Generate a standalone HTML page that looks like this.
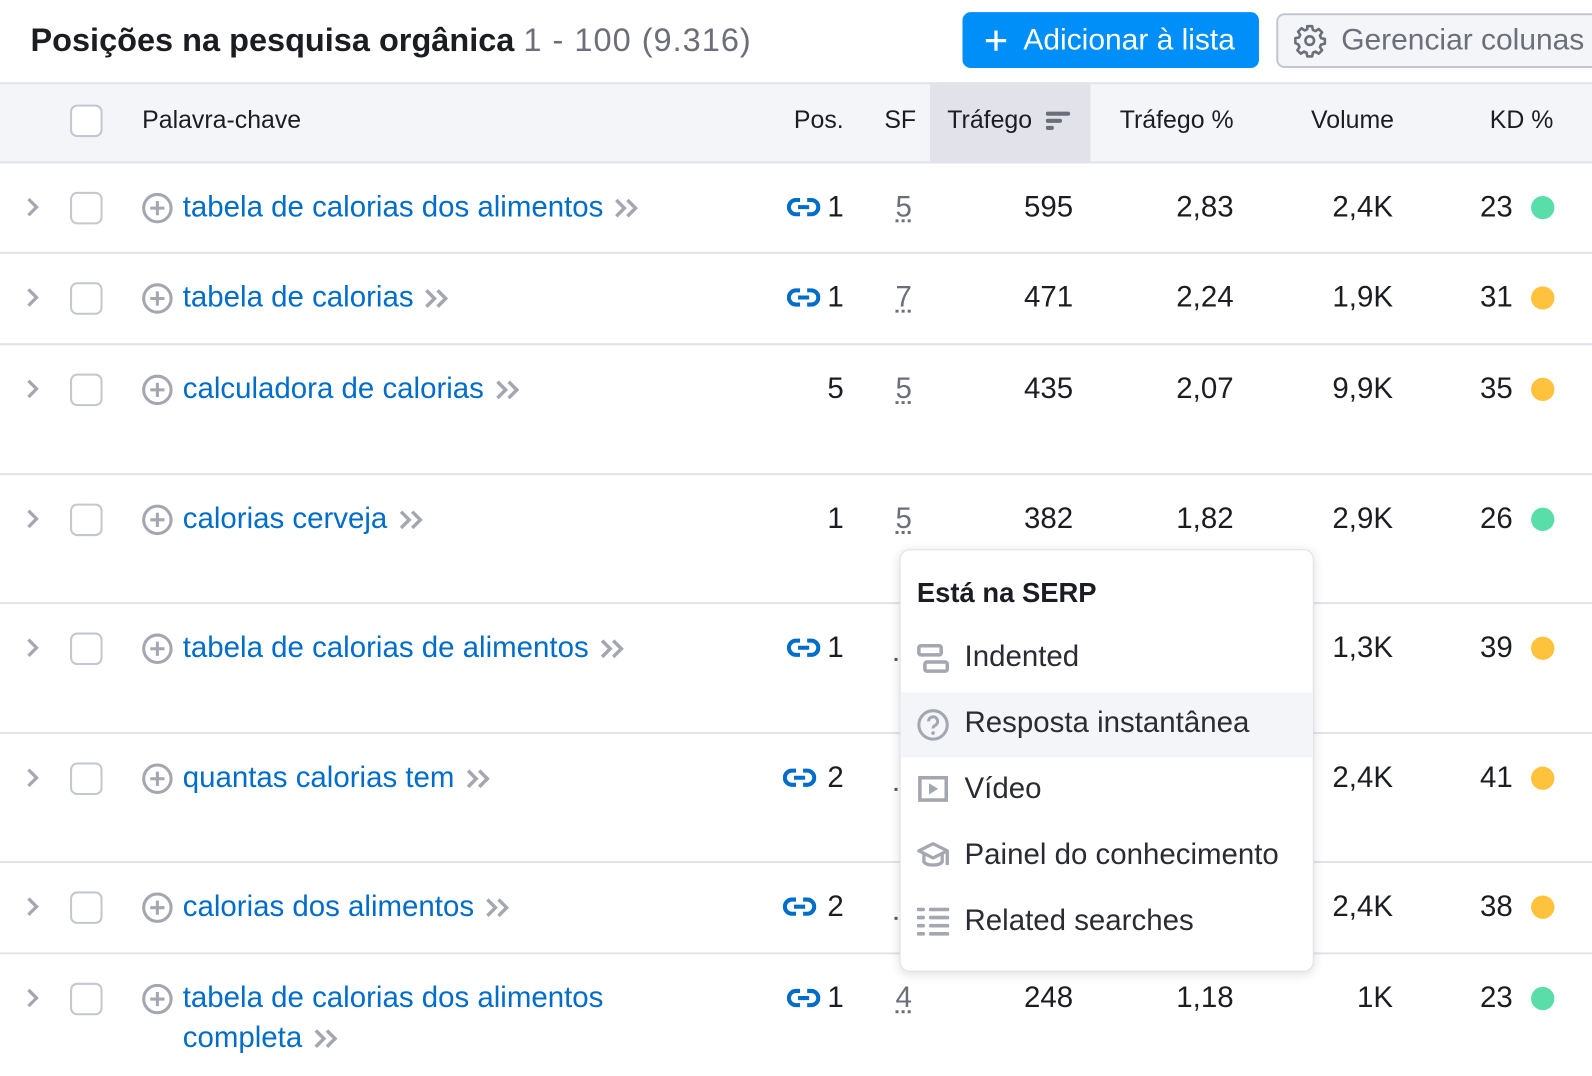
<!DOCTYPE html>
<html><head><meta charset="utf-8">
<style>
*{margin:0;padding:0;box-sizing:border-box}
body{width:1592px;height:1076px;overflow:hidden;background:#fff;font-family:"Liberation Sans",sans-serif;color:#1c1d22;position:relative}
#w{position:absolute;left:0;top:0;width:1568px;height:1060px;transform:scale(1.0153);transform-origin:0 0}
.a{position:absolute;white-space:nowrap}
.t{font-size:29px;line-height:32px;height:32px}
.h{font-size:24.5px;line-height:32px}
.r{text-align:right}
.kw{color:#006dca}
.sep{position:absolute;left:0;width:1592px;height:2px;background:#e2e3ea}
.cb{position:absolute;left:69px;width:32px;height:32px;border:2px solid #c5c7d0;border-radius:7px;background:#fff}
.dot{position:absolute;left:1508px;width:23px;height:23px;border-radius:50%}
.g{background:#59dea9}.y{background:#ffc23c}
.sf{text-decoration:underline dotted #6c6e79;text-underline-offset:3px;color:#6c6e79}
</style></head><body><div id="w">

<div class="a" style="left:30px;top:19px;font-size:32px;line-height:40px;font-weight:bold;color:#1c1d22">Posições na pesquisa orgânica <span style="font-weight:normal;color:#6c6e79;letter-spacing:1px">1 - 100 (9.316)</span></div>

<div class="a" style="left:948px;top:12px;width:292px;height:55px;background:#008ff8;border-radius:8px;color:#fff;font-size:29.5px;line-height:55px;padding-left:20px">
<svg width="26" height="26" viewBox="0 0 26 26" style="vertical-align:-4px;margin-right:14px"><path d="M13 3V23M3 13H23" stroke="#fff" stroke-width="3.2"/></svg>Adicionar à lista</div>

<div class="a" style="left:1257px;top:13px;width:360px;height:54px;background:#f4f5f9;border:2px solid #c4c7cf;border-radius:8px;color:#6c6e79;font-size:29.5px;line-height:50px;padding-left:14px">
<svg width="34" height="34" viewBox="0 0 24 24" style="vertical-align:-8px;margin-right:14px"><path d="M10.3 2h3.4l.5 2.6 1.8.8 2.2-1.5 2.4 2.4-1.5 2.2.8 1.8 2.6.5v3.4l-2.6.5-.8 1.8 1.5 2.2-2.4 2.4-2.2-1.5-1.8.8-.5 2.6h-3.4l-.5-2.6-1.8-.8-2.2 1.5-2.4-2.4 1.5-2.2-.8-1.8L2 13.7v-3.4l2.6-.5.8-1.8-1.5-2.2 2.4-2.4 2.2 1.5 1.8-.8z" fill="none" stroke="#6c6e79" stroke-width="1.8" stroke-linejoin="round"/><circle cx="12" cy="12" r="3" fill="none" stroke="#6c6e79" stroke-width="1.8"/></svg>Gerenciar colunas</div>

<!-- header -->
<div class="a" style="left:0;top:81px;width:1592px;height:80px;background:#f4f5f9;border-top:2px solid #e2e3ea;border-bottom:2px solid #e2e3ea"></div>
<div class="a" style="left:916px;top:83px;width:158px;height:76px;background:#e1e2ea"></div>
<div class="cb" style="top:103px"></div>
<div class="a h" style="left:140px;top:103px">Palavra-chave</div>
<div class="a r h" style="left:740px;width:91px;top:103px">Pos.</div>
<div class="a h" style="left:871px;top:103px">SF</div>
<div class="a h" style="left:933px;top:103px">Tráfego</div>
<svg class="a" style="left:1030px;top:108px" width="26" height="22"><rect x="0" y="2" width="24" height="4" rx="2" fill="#6c6e79"/><rect x="0" y="9" width="16" height="4" rx="2" fill="#6c6e79"/><rect x="0" y="16" width="8" height="4" rx="2" fill="#6c6e79"/></svg>
<div class="a r h" style="left:1060px;width:155px;top:103px">Tráfego %</div>
<div class="a r h" style="left:1220px;width:153px;top:103px">Volume</div>
<div class="a r h" style="left:1400px;width:130px;top:103px">KD %</div>

<!-- separators -->
<div class="sep" style="top:248px"></div>
<div class="sep" style="top:338px"></div>
<div class="sep" style="top:466px"></div>
<div class="sep" style="top:593px"></div>
<div class="sep" style="top:721px"></div>
<div class="sep" style="top:848px"></div>
<div class="sep" style="top:938px"></div>

<!-- Row 1 c=204 -->
<svg class="a" style="left:24px;top:193px" width="16" height="22"><path d="M4 3L12 11L4 19" fill="none" stroke="#a4a6b0" stroke-width="3.2"/></svg>
<div class="cb" style="top:189px"></div>
<svg class="a" style="left:139px;top:189px" width="32" height="32"><circle cx="16" cy="16" r="13.5" fill="none" stroke="#a4a6b0" stroke-width="3"/><path d="M16 9V23M9 16H23" stroke="#a4a6b0" stroke-width="3"/></svg>
<div class="a t kw" style="left:180px;top:188px">tabela de calorias dos alimentos <svg width="28" height="22" style="vertical-align:-3px;margin-left:2px"><path d="M3 3L11 11L3 19M14 3L22 11L14 19" fill="none" stroke="#a4a6b0" stroke-width="3.4"/></svg></div>
<svg class="a" style="left:775px;top:194px" width="33" height="20"><path d="M13 3H9a7 7 0 0 0 0 14h4M20 3h4a7 7 0 0 1 0 14h-4M11 10H22" fill="none" stroke="#006dca" stroke-width="4"/></svg>
<div class="a t r" style="left:790px;width:41px;top:188px">1</div>
<div class="a t sf" style="left:882px;top:188px">5</div>
<div class="a t r" style="left:957px;width:100px;top:188px">595</div>
<div class="a t r" style="left:1115px;width:100px;top:188px">2,83</div>
<div class="a t r" style="left:1272px;width:100px;top:188px">2,4K</div>
<div class="a t r" style="left:1420px;width:70px;top:188px">23</div>
<div class="dot g" style="top:193px"></div>

<!-- Row 2 c=293 -->
<svg class="a" style="left:24px;top:282px" width="16" height="22"><path d="M4 3L12 11L4 19" fill="none" stroke="#a4a6b0" stroke-width="3.2"/></svg>
<div class="cb" style="top:278px"></div>
<svg class="a" style="left:139px;top:278px" width="32" height="32"><circle cx="16" cy="16" r="13.5" fill="none" stroke="#a4a6b0" stroke-width="3"/><path d="M16 9V23M9 16H23" stroke="#a4a6b0" stroke-width="3"/></svg>
<div class="a t kw" style="left:180px;top:277px">tabela de calorias <svg width="28" height="22" style="vertical-align:-3px;margin-left:2px"><path d="M3 3L11 11L3 19M14 3L22 11L14 19" fill="none" stroke="#a4a6b0" stroke-width="3.4"/></svg></div>
<svg class="a" style="left:775px;top:283px" width="33" height="20"><path d="M13 3H9a7 7 0 0 0 0 14h4M20 3h4a7 7 0 0 1 0 14h-4M11 10H22" fill="none" stroke="#006dca" stroke-width="4"/></svg>
<div class="a t r" style="left:790px;width:41px;top:277px">1</div>
<div class="a t sf" style="left:882px;top:277px">7</div>
<div class="a t r" style="left:957px;width:100px;top:277px">471</div>
<div class="a t r" style="left:1115px;width:100px;top:277px">2,24</div>
<div class="a t r" style="left:1272px;width:100px;top:277px">1,9K</div>
<div class="a t r" style="left:1420px;width:70px;top:277px">31</div>
<div class="dot y" style="top:282px"></div>

<!-- Row 3 c=383 -->
<svg class="a" style="left:24px;top:372px" width="16" height="22"><path d="M4 3L12 11L4 19" fill="none" stroke="#a4a6b0" stroke-width="3.2"/></svg>
<div class="cb" style="top:368px"></div>
<svg class="a" style="left:139px;top:368px" width="32" height="32"><circle cx="16" cy="16" r="13.5" fill="none" stroke="#a4a6b0" stroke-width="3"/><path d="M16 9V23M9 16H23" stroke="#a4a6b0" stroke-width="3"/></svg>
<div class="a t kw" style="left:180px;top:367px">calculadora de calorias <svg width="28" height="22" style="vertical-align:-3px;margin-left:2px"><path d="M3 3L11 11L3 19M14 3L22 11L14 19" fill="none" stroke="#a4a6b0" stroke-width="3.4"/></svg></div>
<div class="a t r" style="left:790px;width:41px;top:367px">5</div>
<div class="a t sf" style="left:882px;top:367px">5</div>
<div class="a t r" style="left:957px;width:100px;top:367px">435</div>
<div class="a t r" style="left:1115px;width:100px;top:367px">2,07</div>
<div class="a t r" style="left:1272px;width:100px;top:367px">9,9K</div>
<div class="a t r" style="left:1420px;width:70px;top:367px">35</div>
<div class="dot y" style="top:372px"></div>

<!-- Row 4 c=511 -->
<svg class="a" style="left:24px;top:500px" width="16" height="22"><path d="M4 3L12 11L4 19" fill="none" stroke="#a4a6b0" stroke-width="3.2"/></svg>
<div class="cb" style="top:496px"></div>
<svg class="a" style="left:139px;top:496px" width="32" height="32"><circle cx="16" cy="16" r="13.5" fill="none" stroke="#a4a6b0" stroke-width="3"/><path d="M16 9V23M9 16H23" stroke="#a4a6b0" stroke-width="3"/></svg>
<div class="a t kw" style="left:180px;top:495px">calorias cerveja <svg width="28" height="22" style="vertical-align:-3px;margin-left:2px"><path d="M3 3L11 11L3 19M14 3L22 11L14 19" fill="none" stroke="#a4a6b0" stroke-width="3.4"/></svg></div>
<div class="a t r" style="left:790px;width:41px;top:495px">1</div>
<div class="a t sf" style="left:882px;top:495px">5</div>
<div class="a t r" style="left:957px;width:100px;top:495px">382</div>
<div class="a t r" style="left:1115px;width:100px;top:495px">1,82</div>
<div class="a t r" style="left:1272px;width:100px;top:495px">2,9K</div>
<div class="a t r" style="left:1420px;width:70px;top:495px">26</div>
<div class="dot g" style="top:500px"></div>

<!-- Row 5 c=638 -->
<svg class="a" style="left:24px;top:627px" width="16" height="22"><path d="M4 3L12 11L4 19" fill="none" stroke="#a4a6b0" stroke-width="3.2"/></svg>
<div class="cb" style="top:623px"></div>
<svg class="a" style="left:139px;top:623px" width="32" height="32"><circle cx="16" cy="16" r="13.5" fill="none" stroke="#a4a6b0" stroke-width="3"/><path d="M16 9V23M9 16H23" stroke="#a4a6b0" stroke-width="3"/></svg>
<div class="a t kw" style="left:180px;top:622px">tabela de calorias de alimentos <svg width="28" height="22" style="vertical-align:-3px;margin-left:2px"><path d="M3 3L11 11L3 19M14 3L22 11L14 19" fill="none" stroke="#a4a6b0" stroke-width="3.4"/></svg></div>
<svg class="a" style="left:775px;top:628px" width="33" height="20"><path d="M13 3H9a7 7 0 0 0 0 14h4M20 3h4a7 7 0 0 1 0 14h-4M11 10H22" fill="none" stroke="#006dca" stroke-width="4"/></svg>
<div class="a t r" style="left:790px;width:41px;top:622px">1</div>
<div class="a t r" style="left:1272px;width:100px;top:622px">1,3K</div>
<div class="a t r" style="left:1420px;width:70px;top:622px">39</div>
<div class="dot y" style="top:627px"></div>

<!-- Row 6 c=766 -->
<svg class="a" style="left:24px;top:755px" width="16" height="22"><path d="M4 3L12 11L4 19" fill="none" stroke="#a4a6b0" stroke-width="3.2"/></svg>
<div class="cb" style="top:751px"></div>
<svg class="a" style="left:139px;top:751px" width="32" height="32"><circle cx="16" cy="16" r="13.5" fill="none" stroke="#a4a6b0" stroke-width="3"/><path d="M16 9V23M9 16H23" stroke="#a4a6b0" stroke-width="3"/></svg>
<div class="a t kw" style="left:180px;top:750px">quantas calorias tem <svg width="28" height="22" style="vertical-align:-3px;margin-left:2px"><path d="M3 3L11 11L3 19M14 3L22 11L14 19" fill="none" stroke="#a4a6b0" stroke-width="3.4"/></svg></div>
<svg class="a" style="left:771px;top:756px" width="33" height="20"><path d="M13 3H9a7 7 0 0 0 0 14h4M20 3h4a7 7 0 0 1 0 14h-4M11 10H22" fill="none" stroke="#006dca" stroke-width="4"/></svg>
<div class="a t r" style="left:790px;width:41px;top:750px">2</div>
<div class="a t r" style="left:1272px;width:100px;top:750px">2,4K</div>
<div class="a t r" style="left:1420px;width:70px;top:750px">41</div>
<div class="dot y" style="top:755px"></div>

<!-- Row 7 c=893 -->
<svg class="a" style="left:24px;top:882px" width="16" height="22"><path d="M4 3L12 11L4 19" fill="none" stroke="#a4a6b0" stroke-width="3.2"/></svg>
<div class="cb" style="top:878px"></div>
<svg class="a" style="left:139px;top:878px" width="32" height="32"><circle cx="16" cy="16" r="13.5" fill="none" stroke="#a4a6b0" stroke-width="3"/><path d="M16 9V23M9 16H23" stroke="#a4a6b0" stroke-width="3"/></svg>
<div class="a t kw" style="left:180px;top:877px">calorias dos alimentos <svg width="28" height="22" style="vertical-align:-3px;margin-left:2px"><path d="M3 3L11 11L3 19M14 3L22 11L14 19" fill="none" stroke="#a4a6b0" stroke-width="3.4"/></svg></div>
<svg class="a" style="left:771px;top:883px" width="33" height="20"><path d="M13 3H9a7 7 0 0 0 0 14h4M20 3h4a7 7 0 0 1 0 14h-4M11 10H22" fill="none" stroke="#006dca" stroke-width="4"/></svg>
<div class="a t r" style="left:790px;width:41px;top:877px">2</div>
<div class="a t r" style="left:1272px;width:100px;top:877px">2,4K</div>
<div class="a t r" style="left:1420px;width:70px;top:877px">38</div>
<div class="dot y" style="top:882px"></div>

<!-- Row 8 c=983 -->
<svg class="a" style="left:24px;top:972px" width="16" height="22"><path d="M4 3L12 11L4 19" fill="none" stroke="#a4a6b0" stroke-width="3.2"/></svg>
<div class="cb" style="top:968px"></div>
<svg class="a" style="left:139px;top:968px" width="32" height="32"><circle cx="16" cy="16" r="13.5" fill="none" stroke="#a4a6b0" stroke-width="3"/><path d="M16 9V23M9 16H23" stroke="#a4a6b0" stroke-width="3"/></svg>
<div class="a t kw" style="left:180px;top:967px">tabela de calorias dos alimentos</div>
<div class="a t kw" style="left:180px;top:1006px">completa <svg width="28" height="22" style="vertical-align:-3px;margin-left:2px"><path d="M3 3L11 11L3 19M14 3L22 11L14 19" fill="none" stroke="#a4a6b0" stroke-width="3.4"/></svg></div>
<svg class="a" style="left:775px;top:973px" width="33" height="20"><path d="M13 3H9a7 7 0 0 0 0 14h4M20 3h4a7 7 0 0 1 0 14h-4M11 10H22" fill="none" stroke="#006dca" stroke-width="4"/></svg>
<div class="a t r" style="left:790px;width:41px;top:967px">1</div>
<div class="a t sf" style="left:882px;top:967px">4</div>
<div class="a t r" style="left:957px;width:100px;top:967px">248</div>
<div class="a t r" style="left:1115px;width:100px;top:967px">1,18</div>
<div class="a t r" style="left:1272px;width:100px;top:967px">1K</div>
<div class="a t r" style="left:1420px;width:70px;top:967px">23</div>
<div class="dot g" style="top:972px"></div>

<!-- dropdown -->
<div class="a" style="left:886px;top:541px;width:408px;height:416px;background:#fff;border:1px solid #e0e1e9;border-radius:10px;box-shadow:0 2px 10px rgba(25,27,35,.15)">
  <div class="a" style="left:16px;top:24px;font-size:27px;line-height:36px;font-weight:bold;color:#1c1d22">Está na SERP</div>
  <div class="a" style="left:0;top:140px;width:406px;height:64px;background:#f4f5f9"></div>
  <svg class="a" style="left:16px;top:92px" width="32" height="30"><rect x="2" y="2" width="22" height="9" rx="2" fill="none" stroke="#a4a6b0" stroke-width="3.5"/><rect x="8" y="18" width="22" height="9" rx="2" fill="none" stroke="#a4a6b0" stroke-width="3.5"/></svg>
  <div class="a t" style="left:63px;top:89px;color:#2b2c33">Indented</div>
  <svg class="a" style="left:16px;top:156px" width="32" height="32"><circle cx="16" cy="16" r="14" fill="none" stroke="#a4a6b0" stroke-width="3"/><path d="M11.5 12.5a4.5 4.5 0 1 1 6.5 4c-1.3.7-2 1.4-2 3" fill="none" stroke="#a4a6b0" stroke-width="3"/><circle cx="16" cy="24" r="1.8" fill="#a4a6b0"/></svg>
  <div class="a t" style="left:63px;top:154px;color:#2b2c33">Resposta instantânea</div>
  <svg class="a" style="left:17px;top:222px" width="30" height="26"><rect x="2" y="2" width="26" height="22" fill="none" stroke="#a4a6b0" stroke-width="3.5"/><path d="M11 7.5L20 13L11 18.5Z" fill="#a4a6b0"/></svg>
  <div class="a t" style="left:63px;top:219px;color:#2b2c33">Vídeo</div>
  <svg class="a" style="left:15px;top:285px" width="34" height="30"><path d="M3 11L17 4L31 11L17 18Z" fill="none" stroke="#a4a6b0" stroke-width="3.2" stroke-linejoin="round"/><path d="M8 14V22C11 26 23 26 26 22V14" fill="none" stroke="#a4a6b0" stroke-width="3.2"/><path d="M31 11V25" stroke="#a4a6b0" stroke-width="3.2"/></svg>
  <div class="a t" style="left:63px;top:284px;color:#2b2c33">Painel do conhecimento</div>
  <svg class="a" style="left:16px;top:352px" width="32" height="28"><g fill="#a4a6b0"><rect x="0" y="0" width="8" height="3.5" rx="1.5"/><rect x="12" y="0" width="20" height="3.5" rx="1.5"/><rect x="0" y="8" width="8" height="3.5" rx="1.5"/><rect x="12" y="8" width="20" height="3.5" rx="1.5"/><rect x="0" y="16" width="8" height="3.5" rx="1.5"/><rect x="12" y="16" width="20" height="3.5" rx="1.5"/><rect x="0" y="24" width="8" height="3.5" rx="1.5"/><rect x="12" y="24" width="20" height="3.5" rx="1.5"/></g></svg>
  <div class="a t" style="left:63px;top:349px;color:#2b2c33">Related searches</div>
</div>
<div class="a" style="left:881px;top:648px;width:3px;height:3px;background:#555"></div>
<div class="a" style="left:881px;top:776px;width:3px;height:3px;background:#555"></div>
<div class="a" style="left:881px;top:903px;width:3px;height:3px;background:#555"></div>

</div></body></html>
